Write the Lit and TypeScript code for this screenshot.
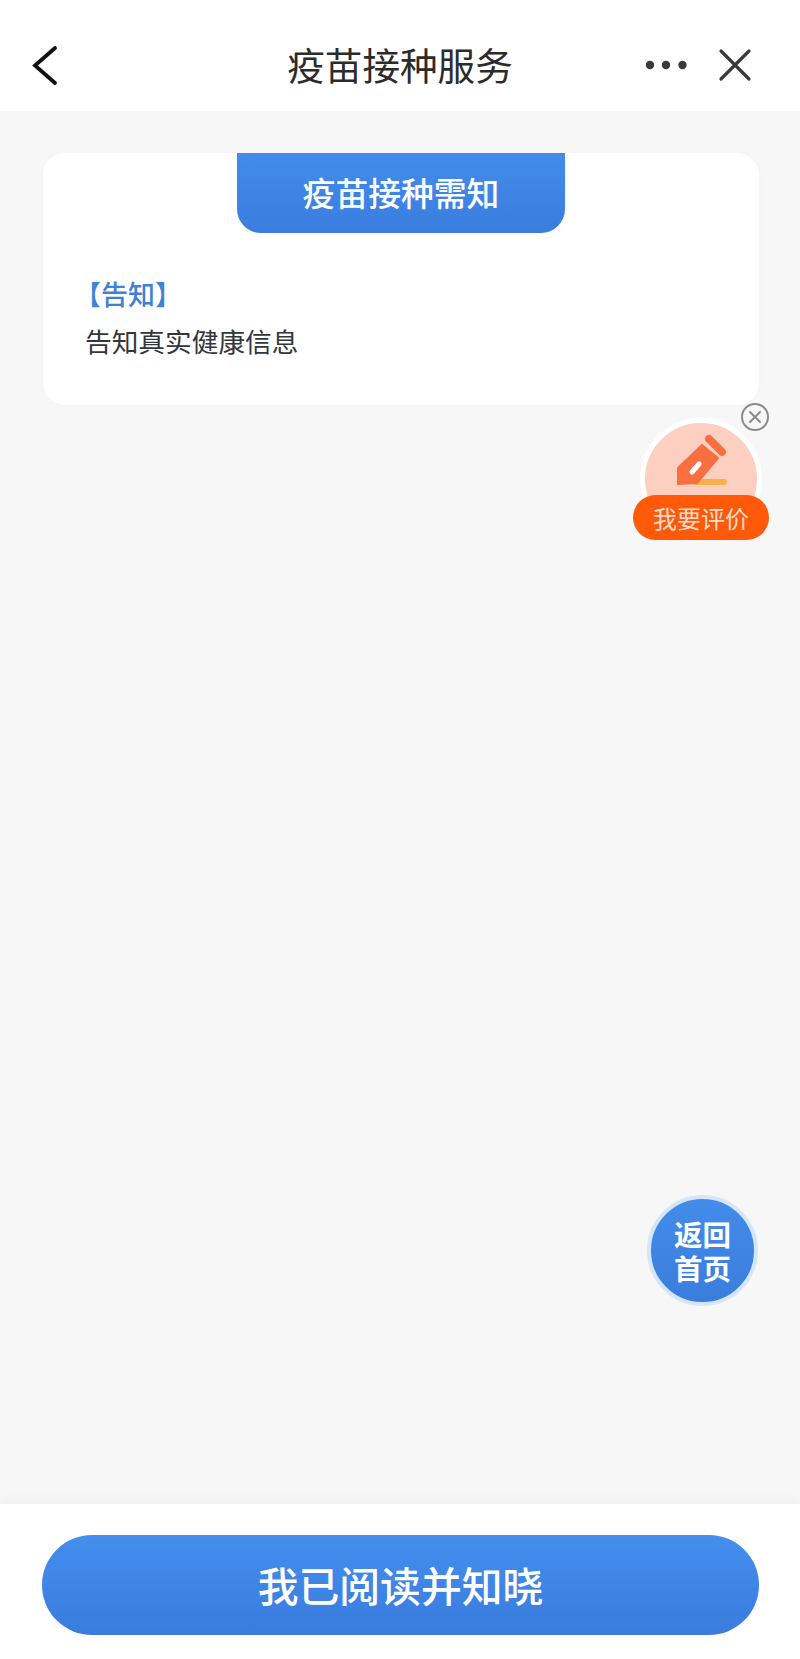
import { LitElement, html, css } from "lit";
import { customElement } from "lit/decorators.js";

@customElement("app-root")
export class AppRoot extends LitElement {
  static styles = css`
    :host {
      display: block;
      width: 800px;
      height: 1659px;
      font-family: "Noto Sans CJK SC", "Noto Sans", sans-serif;
    }
    .page {
      position: relative;
      display: flex;
      flex-direction: column;
      height: 1659px;
      background: #f7f7f7;
      overflow: hidden;
    }
    .nav {
      flex: none;
      height: 111px;
      background: #fff;
      display: flex;
      align-items: center;
      position: relative;
      justify-content: center;
      padding-top: 17px;
      box-sizing: border-box;
    }
    .nav-title {
      font-size: 37.6px;
      line-height: 44px;
      color: #2b2b2b;
    }
    .nav-back {
      position: absolute;
      left: 30px;
      top: 43px;
    }
    .nav-actions {
      position: absolute;
      left: 640px;
      top: 45px;
      display: flex;
      align-items: center;
      gap: 24px;
    }
    .main {
      flex: 1;
      padding: 42px 41px 0 43px;
    }
    .card {
      background: #fff;
      border-radius: 22px;
      height: 252px;
      box-shadow: 0 0 8px rgba(0, 0, 0, 0.015);
      display: flex;
      flex-direction: column;
      align-items: center;
    }
    .tab {
      width: 328px;
      height: 80px;
      border-radius: 0 0 24px 24px;
      background: linear-gradient(180deg, #438cec, #3a7ddf);
      color: #fff;
      font-size: 32.8px;
      font-weight: 500;
      line-height: 78px;
      text-align: center;
      flex: none;
    }
    .body {
      align-self: stretch;
      padding: 42px 42px 0;
    }
    .label {
      color: #3f82d6;
      font-size: 27px;
      line-height: 38px;
      font-weight: 500;
      margin-left: -11px;
    }
    .text {
      color: #33363b;
      font-size: 26.7px;
      line-height: 38px;
      margin-top: 9px;
    }
    .footer {
      flex: none;
      height: 155px;
      box-sizing: border-box;
      background: #fff;
      padding: 31px 41px 0 42px;
      box-shadow: 0 -4px 10px rgba(0, 0, 0, 0.04);
    }
    .confirm {
      height: 100px;
      border-radius: 50px;
      background: linear-gradient(180deg, #448eee, #397cde);
      color: #fff;
      font-size: 40.8px;
      font-weight: 500;
      line-height: 100px;
      text-align: center;
    }
    .rate {
      position: absolute;
      left: 633px;
      top: 405px;
      width: 140px;
      height: 136px;
    }
    .rate-circle {
      position: absolute;
      left: 7px;
      top: 13px;
      width: 122px;
      height: 122px;
      box-sizing: border-box;
      border-radius: 50%;
      border: 5px solid #fff;
      background: #fdcfc0;
      display: flex;
      justify-content: center;
      padding-top: 2px;
    }
    .rate-pill {
      position: absolute;
      left: 0;
      top: 90px;
      width: 136px;
      height: 45px;
      border-radius: 23px;
      background: #ff5a0a;
      color: #fbdccb;
      font-size: 24px;
      line-height: 45px;
      text-align: center;
    }
    .rate-close {
      position: absolute;
      left: 107px;
      top: -3px;
    }
    .home {
      position: absolute;
      left: 647px;
      top: 1195px;
      width: 111px;
      height: 111px;
      box-sizing: border-box;
      border-radius: 50%;
      border: 4px solid #d5e6f8;
      background: linear-gradient(180deg, #438cea, #3a7ddd);
      color: #fff;
      font-size: 28.5px;
      font-weight: 700;
      line-height: 34px;
      display: flex;
      align-items: center;
      justify-content: center;
      text-align: center;
    }
  `;

  render() {
    return html`
      <div class="page">
        <header class="nav">
          <svg class="nav-back" width="32" height="44" viewBox="0 0 32 44">
            <path d="M25 5 L5 22.5 L25 40" fill="none" stroke="#111" stroke-width="3.8" stroke-linecap="round" stroke-linejoin="miter"/>
          </svg>
          <div class="nav-title">疫苗接种服务</div>
          <div class="nav-actions">
            <svg width="52" height="40" viewBox="0 0 52 40">
              <circle cx="10" cy="20" r="4.2" fill="#3a3a3a"/>
              <circle cx="26" cy="20" r="4.2" fill="#3a3a3a"/>
              <circle cx="42.5" cy="20" r="4.2" fill="#3a3a3a"/>
            </svg>
            <svg width="36" height="40" viewBox="0 0 36 40">
              <path d="M5 6 L33 34 M33 6 L5 34" fill="none" stroke="#3a3a3a" stroke-width="3.2" stroke-linecap="round"/>
            </svg>
          </div>
        </header>
        <main class="main">
          <section class="card">
            <div class="tab">疫苗接种需知</div>
            <div class="body">
              <div class="label">【告知】</div>
              <div class="text">告知真实健康信息</div>
            </div>
          </section>
        </main>
        <footer class="footer">
          <div class="confirm">我已阅读并知晓</div>
        </footer>
        <div class="rate">
          <div class="rate-circle">
            <svg width="80" height="70" viewBox="2 0 80 70">
              <path d="M37 57 H65" stroke="#f9b04a" stroke-width="6" stroke-linecap="round" fill="none"/>
              <path d="M50 14 L63 27" stroke="#f96f3f" stroke-width="8" stroke-linecap="round" fill="none"/>
              <path d="M43 20 L59 33 L38 58 L19 59 L19 43 Z" fill="#f96f3f" stroke="#f96f3f" stroke-width="2" stroke-linejoin="round"/>
              <path d="M33 47 L40 39" stroke="#fff" stroke-width="5" stroke-linecap="round" fill="none"/>
            </svg>
          </div>
          <div class="rate-pill">我要评价</div>
          <svg class="rate-close" width="30" height="30" viewBox="0 0 30 30">
            <circle cx="15" cy="15" r="13" fill="#f7f7f7" stroke="#8b8b8b" stroke-width="2"/>
            <path d="M10 10 L20 20 M20 10 L10 20" stroke="#8b8b8b" stroke-width="2" stroke-linecap="round"/>
          </svg>
        </div>
        <div class="home"><div>返回<br />首页</div></div>
      </div>
    `;
  }
}
